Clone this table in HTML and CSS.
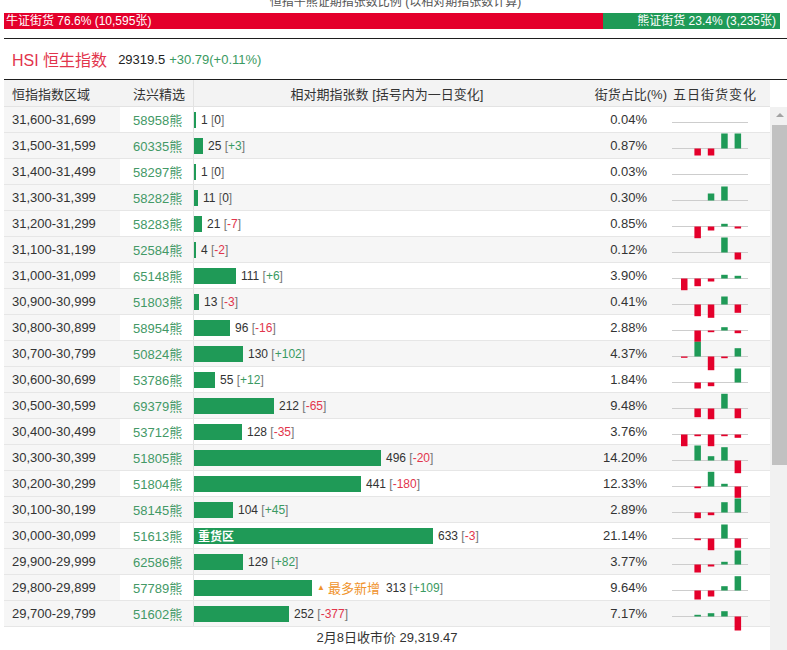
FILE: index.html
```html
<!DOCTYPE html>
<html lang="zh">
<head>
<meta charset="utf-8">
<title>恒指牛熊证期指张数比例</title>
<link rel="stylesheet" href="styles.css">
</head>
<body>
<div class="page">
  <div class="title">恒指牛熊证期指张数比例 (以相对期指张数计算)</div>
  <div class="ratio">
    <div class="ratio-bull">牛证街货 76.6% (10,595张)</div>
    <div class="ratio-bear">熊证街货 23.4% (3,235张)</div>
  </div>
  <div class="index-line">
    <span class="idx-name">HSI 恒生指数</span>
    <span class="idx-price">29319.5</span>
    <span class="idx-chg">+30.79(+0.11%)</span>
  </div>
  <div class="table-head">
    <div class="th c1">恒指指数区域</div>
    <div class="th c2">法兴精选</div>
    <div class="th c3">相对期指张数 [括号内为一日变化]</div>
    <div class="th c4">街货占比(%)</div>
    <div class="th c5">五日街货变化</div>
  </div>
  <div class="body-wrap">
    <div class="rows">
      <div id="rows"></div>
      <div class="footer">2月8日收市价 29,319.47</div>
    </div>
    <div class="scrollbar">
      <div class="sb-arrow"><span class="sb-tri"></span></div>
      <div class="sb-thumb"></div>
    </div>
  </div>
</div>
<script src="script.js"></script>
</body>
</html>
```

FILE: styles.css
```css
html, body {
  margin: 0;
  padding: 0;
  overflow: hidden;
  background: #fff;
}
body {
  font-family: "Liberation Sans", Arial, "Noto Sans CJK SC", sans-serif;
  color: #333;
  font-size: 13px;
}
.page {
  margin-top: -5px;
  padding-left: 4px;
}
.title {
  font-size: 12px;
  line-height: 14px;
  color: #555;
  text-align: center;
}
.ratio {
  display: flex;
  height: 16px;
  margin-top: 4px;
  margin-right: 7px;
  font-size: 12px;
  line-height: 16px;
  color: #fff;
}
.ratio-bull {
  width: 599px;
  background: #e4002b;
  padding-left: 2px;
  box-sizing: border-box;
  white-space: nowrap;
}
.ratio-bear {
  flex: 1;
  background: #1f9a57;
  text-align: right;
  padding-right: 4px;
  white-space: nowrap;
}
.index-line {
  margin-top: 9px;
  height: 40px;
  border-top: 1px solid #1e1e1e;
  border-bottom: 1px solid #1e1e1e;
  display: flex;
  align-items: center;
  padding-left: 8px;
}
.idx-name {
  font-size: 16px;
  color: #e2354c;
  margin-right: 11px;
}
.idx-price {
  font-size: 13px;
  color: #222;
  margin-right: 4px;
}
.idx-chg {
  font-size: 13px;
  color: #3a9a62;
}
.table-head, .row {
  display: grid;
  grid-template-columns: 116px 73px 387px 90px 100px;
  width: 766px;
}
.table-head {
  height: 26px;
  background: #f3f3f3;
  border-bottom: 1px solid #e3e3e3;
}
.th {
  display: flex;
  align-items: center;
  font-size: 13px;
  color: #333;
  white-space: nowrap;
}
.th.c1 { padding-left: 8px; }
.th.c2 { padding-left: 13px; }
.th.c3 { justify-content: center; border-left: 1px solid #e2e2e2; }
.th.c4 { justify-content: flex-end; padding-right: 3px; }
.th.c5 { padding-left: 3px; letter-spacing: 1px; }
.body-wrap {
  display: flex;
  height: 543px;
  overflow: hidden;
}
.rows {
  width: 766px;
}
.row {
  height: 25px;
  border-bottom: 1px solid #e6e6e6;
  background: #fff;
}
.row.alt { background: #f6f6f6; }
.cell {
  display: flex;
  align-items: center;
  white-space: nowrap;
}
.cell.c1 {
  padding-left: 8px;
  background: #f6f6f6;
  color: #333;
}
.cell.c2 {
  padding-left: 13px;
  color: #439966;
}
.cell.c3 {
  border-left: 1px solid #e2e2e2;
  font-size: 12px;
  color: #333;
}
.cell.c4 {
  justify-content: flex-end;
  padding-right: 23px;
  color: #333;
}
.cell.c5 {
  padding-left: 2px;
}
.bar {
  height: 16px;
  background: #1f9a57;
  display: flex;
  align-items: center;
  flex: none;
}
.bar-label {
  color: #fff;
  font-size: 12px;
  font-weight: bold;
  padding-left: 4px;
}
.tag-new {
  color: #f0932b;
  margin-left: 5px;
  display: flex;
  align-items: center;
  font-size: 13px;
}
.tag-tri {
  font-size: 8px;
  margin-right: 3px;
}
.val {
  margin-left: 5px;
}
.tag-new + .val { margin-left: 6px; }
.br { color: #777; }
.pos { color: #3a9a62; }
.neg { color: #e2354c; }
.spark {
  overflow: visible;
  display: block;
}
.footer {
  height: 22px;
  line-height: 22px;
  text-align: center;
  font-size: 13px;
  color: #333;
}
.scrollbar {
  width: 17px;
  background: #f1f1f1;
  display: flex;
  flex-direction: column;
  align-items: flex-end;
}
.sb-arrow {
  height: 16px;
  width: 15px;
  display: flex;
  align-items: center;
  justify-content: center;
}
.sb-tri {
  width: 0;
  height: 0;
  border-left: 4px solid transparent;
  border-right: 4px solid transparent;
  border-bottom: 4px solid #a3a3a3;
}
.sb-thumb {
  margin-top: 2px;
  width: 15px;
  height: 340px;
  background: #c1c1c1;
}
```

FILE: script.js
```js
var data = [
  ["31,600-31,699", "58958", 1, 0, "0.04%", [0, 0, 0, 0, 0]],
  ["31,500-31,599", "60335", 25, 3, "0.87%", [0, -7, -7, 15, 15]],
  ["31,400-31,499", "58297", 1, 0, "0.03%", [0, 0, 0, 0, 0]],
  ["31,300-31,399", "58282", 11, 0, "0.30%", [0, 0, 7, 14, 0]],
  ["31,200-31,299", "58283", 21, -7, "0.85%", [0, -11.7, -4, 2.7, -2]],
  ["31,100-31,199", "52584", 4, -2, "0.12%", [0, 0, 0, 15, -7]],
  ["31,000-31,099", "65148", 111, 6, "3.90%", [-11.7, -7.7, -3, 3.7, 2.7]],
  ["30,900-30,999", "51803", 13, -3, "0.41%", [0, -11.7, -13.3, 8, -8.3]],
  ["30,800-30,899", "58954", 96, -16, "2.88%", [0, -11.3, -1.7, 3.3, -2.7]],
  ["30,700-30,799", "50824", 130, 102, "4.37%", [-1.3, 14.7, -13.7, -1.7, 8.3]],
  ["30,600-30,699", "53786", 55, 12, "1.84%", [0, -6, -3.7, 0, 14]],
  ["30,500-30,599", "69379", 212, -65, "9.48%", [0, -8.7, -10.7, 14.7, -9.7]],
  ["30,400-30,499", "53712", 128, -35, "3.76%", [-11.7, -1.7, -11.7, -1.7, -3.3]],
  ["30,300-30,399", "51805", 496, -20, "14.20%", [0, 15, 4.3, 13.3, -12.7]],
  ["30,200-30,299", "51804", 441, -180, "12.33%", [0, -1.7, 14.7, 2.7, -11.3]],
  ["30,100-30,199", "58145", 104, 45, "2.89%", [0, -5.7, -2.7, 10.3, 14]],
  ["30,000-30,099", "51613", 633, -3, "21.14%", [0, -1.7, -11.7, 14, -9.3]],
  ["29,900-29,999", "62586", 129, 82, "3.77%", [0, -8, -2, 2.7, 14]],
  ["29,800-29,899", "57789", 313, 109, "9.64%", [0, -9, -6, 4.3, 14.3]],
  ["29,700-29,799", "51602", 252, -377, "7.17%", [0, 1.7, 3.3, 5.3, -14]]
];

var SCALE = 239 / 633;
var BASE = 15.5;

function changeHtml(c) {
  if (c === 0) {
    return '<span class="br">[</span>0<span class="br">]</span>';
  }
  var cls = c > 0 ? "pos" : "neg";
  var txt = c > 0 ? "+" + c : String(c);
  return '<span class="br">[</span><span class="' + cls + '">' + txt + '</span><span class="br">]</span>';
}

function spark(v) {
  var s = '<svg class="spark" width="76" height="25" viewBox="0 0 76 25">';
  s += '<line x1="0" y1="' + BASE + '" x2="76" y2="' + BASE + '" stroke="#cdcdcd" stroke-width="1"/>';
  for (var k = 0; k < v.length; k++) {
    var h = v[k];
    if (!h) continue;
    var x = (9 + k * 13.4).toFixed(1);
    var y = h > 0 ? BASE - h : BASE;
    s += '<rect x="' + x + '" y="' + y.toFixed(1) + '" width="6.5" height="' + Math.abs(h) + '" fill="' + (h > 0 ? "#1f9a57" : "#e4002b") + '"/>';
  }
  s += "</svg>";
  return s;
}

var rowsEl = document.getElementById("rows");
var html = "";
for (var i = 0; i < data.length; i++) {
  var d = data[i];
  var w = Math.max(2, Math.round(d[2] * SCALE));
  var label = i === 16 ? '<span class="bar-label">重货区</span>' : "";
  var tag = i === 18 ? '<span class="tag-new"><span class="tag-tri">▲</span>最多新增</span>' : "";
  html += '<div class="row' + (i % 2 ? " alt" : "") + '">' +
    '<div class="cell c1">' + d[0] + '</div>' +
    '<div class="cell c2">' + d[1] + '熊</div>' +
    '<div class="cell c3"><span class="bar" style="width:' + w + 'px">' + label + '</span>' + tag +
    '<span class="val">' + d[2] + ' ' + changeHtml(d[3]) + '</span></div>' +
    '<div class="cell c4">' + d[4] + '</div>' +
    '<div class="cell c5">' + spark(d[5]) + '</div>' +
    '</div>';
}
rowsEl.innerHTML = html;
```
